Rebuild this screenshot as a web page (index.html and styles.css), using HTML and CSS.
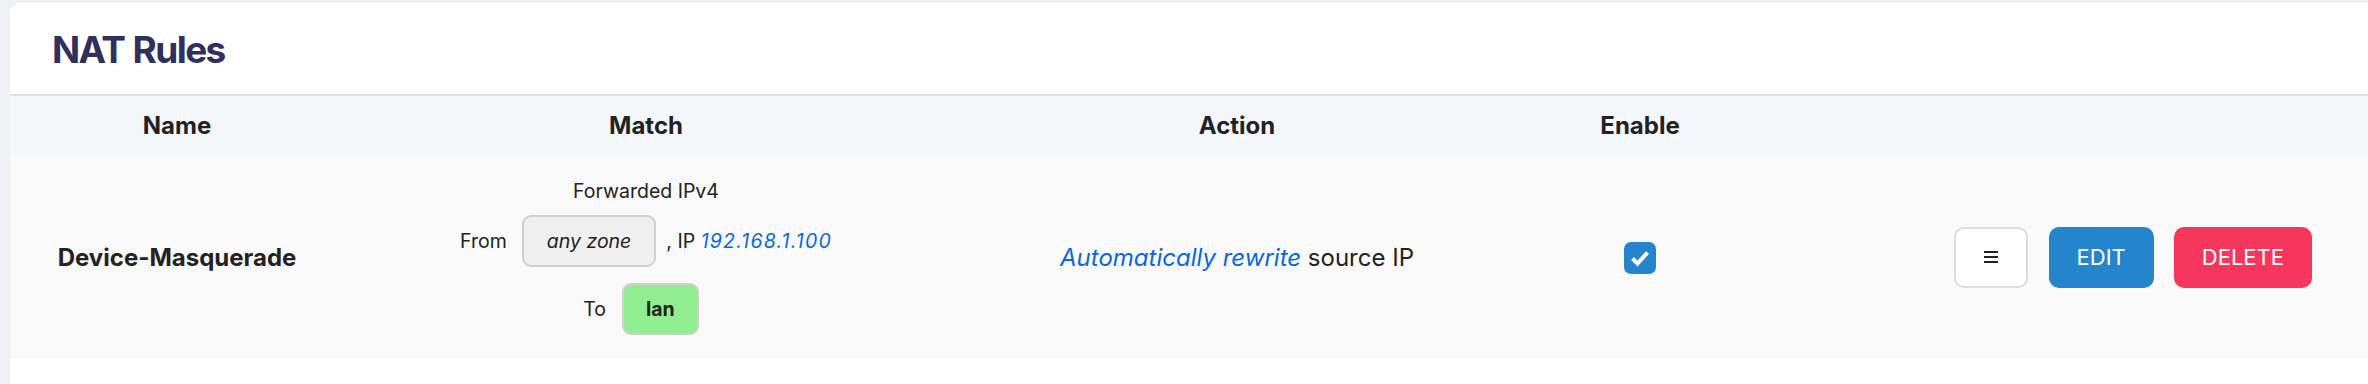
FILE: index.html
```html
<!DOCTYPE html>
<html lang="en">
<head>
    <meta charset="UTF-8">
    <meta name="viewport" content="width=device-width, initial-scale=1.0">
    <title>NAT Rules</title>
    <link rel="stylesheet" href="styles.css">
</head>
<body>
    <div class="card">
        <h2 class="card-title">NAT Rules</h2>
        <table class="rules">
            <colgroup>
                <col class="col-name">
                <col class="col-match">
                <col class="col-action">
                <col class="col-enable">
                <col>
            </colgroup>
            <thead>
                <tr>
                    <th>Name</th>
                    <th>Match</th>
                    <th>Action</th>
                    <th>Enable</th>
                    <th></th>
                </tr>
            </thead>
            <tbody>
                <tr>
                    <td class="rule-name">Device-Masquerade</td>
                    <td>
                        <div class="match">
                            <div class="match-title">Forwarded IPv4</div>
                            <div class="match-line">
                                From <span class="zone zone-any">any zone</span>, IP&nbsp;<a class="ip" href="#">192.168.1.100</a>
                            </div>
                            <div class="match-line match-to">
                                To <span class="zone zone-lan">lan</span>
                            </div>
                        </div>
                    </td>
                    <td class="rule-action"><a class="link" href="#">Automatically rewrite</a> source IP</td>
                    <td class="rule-enable">
                        <span class="check">
                            <svg width="32" height="32" viewBox="0 0 32 32">
                                <rect width="32" height="32" rx="7" fill="#2585cc"/>
                                <path d="M8.5 16.5 L13.5 21.5 L23.5 10.5" fill="none" stroke="#fff" stroke-width="4"/>
                            </svg>
                        </span>
                    </td>
                    <td>
                        <div class="actions">
                            <button class="btn btn-menu" title="Más">
                                <svg width="14" height="12" viewBox="0 0 14 12">
                                    <rect x="0" y="0" width="14" height="2" fill="#222"/>
                                    <rect x="0" y="5" width="14" height="2" fill="#222"/>
                                    <rect x="0" y="10" width="14" height="2" fill="#222"/>
                                </svg>
                            </button>
                            <button class="btn btn-edit">EDIT</button>
                            <button class="btn btn-delete">DELETE</button>
                        </div>
                    </td>
                </tr>
            </tbody>
        </table>
    </div>
</body>
</html>
```

FILE: styles.css
```css
/* Tabla de reglas NAT */
body {
    margin: 0;
    background-color: #eef0f4;
    font-family: Inter, "Noto Sans", Arial, sans-serif;
    color: #222;
    overflow: hidden;
}
.card {
    margin: 3px 0 0 10px;
    background-color: #fff;
    border-radius: 10px 0 0 0;
    padding-bottom: 60px;
}
.card-title {
    margin: 0;
    padding: 24px 0 22px 42px;
    font-size: 37px;
    line-height: 45px;
    font-weight: 700;
    color: #302f5e;
    letter-spacing: -1.6px;
    word-spacing: 1px;
}
.rules {
    width: 100%;
    border-collapse: collapse;
    border-spacing: 0;
    table-layout: fixed;
}
.col-name { width: 334px; }
.col-match { width: 604px; }
.col-action { width: 578px; }
.col-enable { width: 228px; }

.rules thead tr {
    background-color: #f4f7fa;
    border-top: 2px solid #dcdde1;
}
.rules th {
    padding: 15px 0;
    font-size: 24px;
    line-height: 29px;
    font-weight: 700;
    text-align: center;
}
.rules tbody tr {
    background-color: #f9f9f9;
}
.rules td {
    padding: 24px 0;
    vertical-align: middle;
    text-align: center;
    font-size: 24px;
}
.rule-name {
    font-weight: 700;
}

/* Columna de coincidencia */
.match {
    display: flex;
    flex-direction: column;
    align-items: center;
    font-size: 19.5px;
    line-height: 24px;
}
.match-line {
    display: flex;
    align-items: center;
    margin-top: 12px;
}
.match-to {
    margin-top: 16px;
}
.zone {
    display: inline-block;
    padding: 12px 23px;
    border: 2px solid #cfcfcf;
    border-radius: 9px;
    margin: 0 10px 0 15px;
}
.zone-any {
    background-color: #efefef;
    font-style: italic;
}
.zone-lan {
    background-color: #90ee90;
    font-weight: 700;
    margin-left: 16px;
    padding: 12px 22px;
}
.ip,
.link {
    color: #0a68d8;
    font-style: italic;
    text-decoration: none;
}
.ip {
    letter-spacing: 1.2px;
}

.check {
    display: inline-block;
    width: 32px;
    height: 32px;
    margin-top: 8px;
}
.check svg {
    display: block;
}

/* Botones */
.actions {
    display: flex;
    justify-content: flex-end;
    gap: 20px;
    padding-right: 56px;
}
.btn {
    height: 61px;
    border: none;
    border-radius: 10px;
    font-family: Inter, "Noto Sans", Arial, sans-serif;
    font-size: 22px;
    color: #fff;
    padding: 0 28px;
    cursor: pointer;
}
.btn-menu {
    width: 74px;
    background-color: #fff;
    border: 2px solid #dcdcdc;
    display: flex;
    align-items: center;
    justify-content: center;
    padding: 0;
}
.btn-edit {
    background-color: #2585cc;
    margin-left: 1px;
}
.btn-delete {
    background-color: #f5375d;
}
```
